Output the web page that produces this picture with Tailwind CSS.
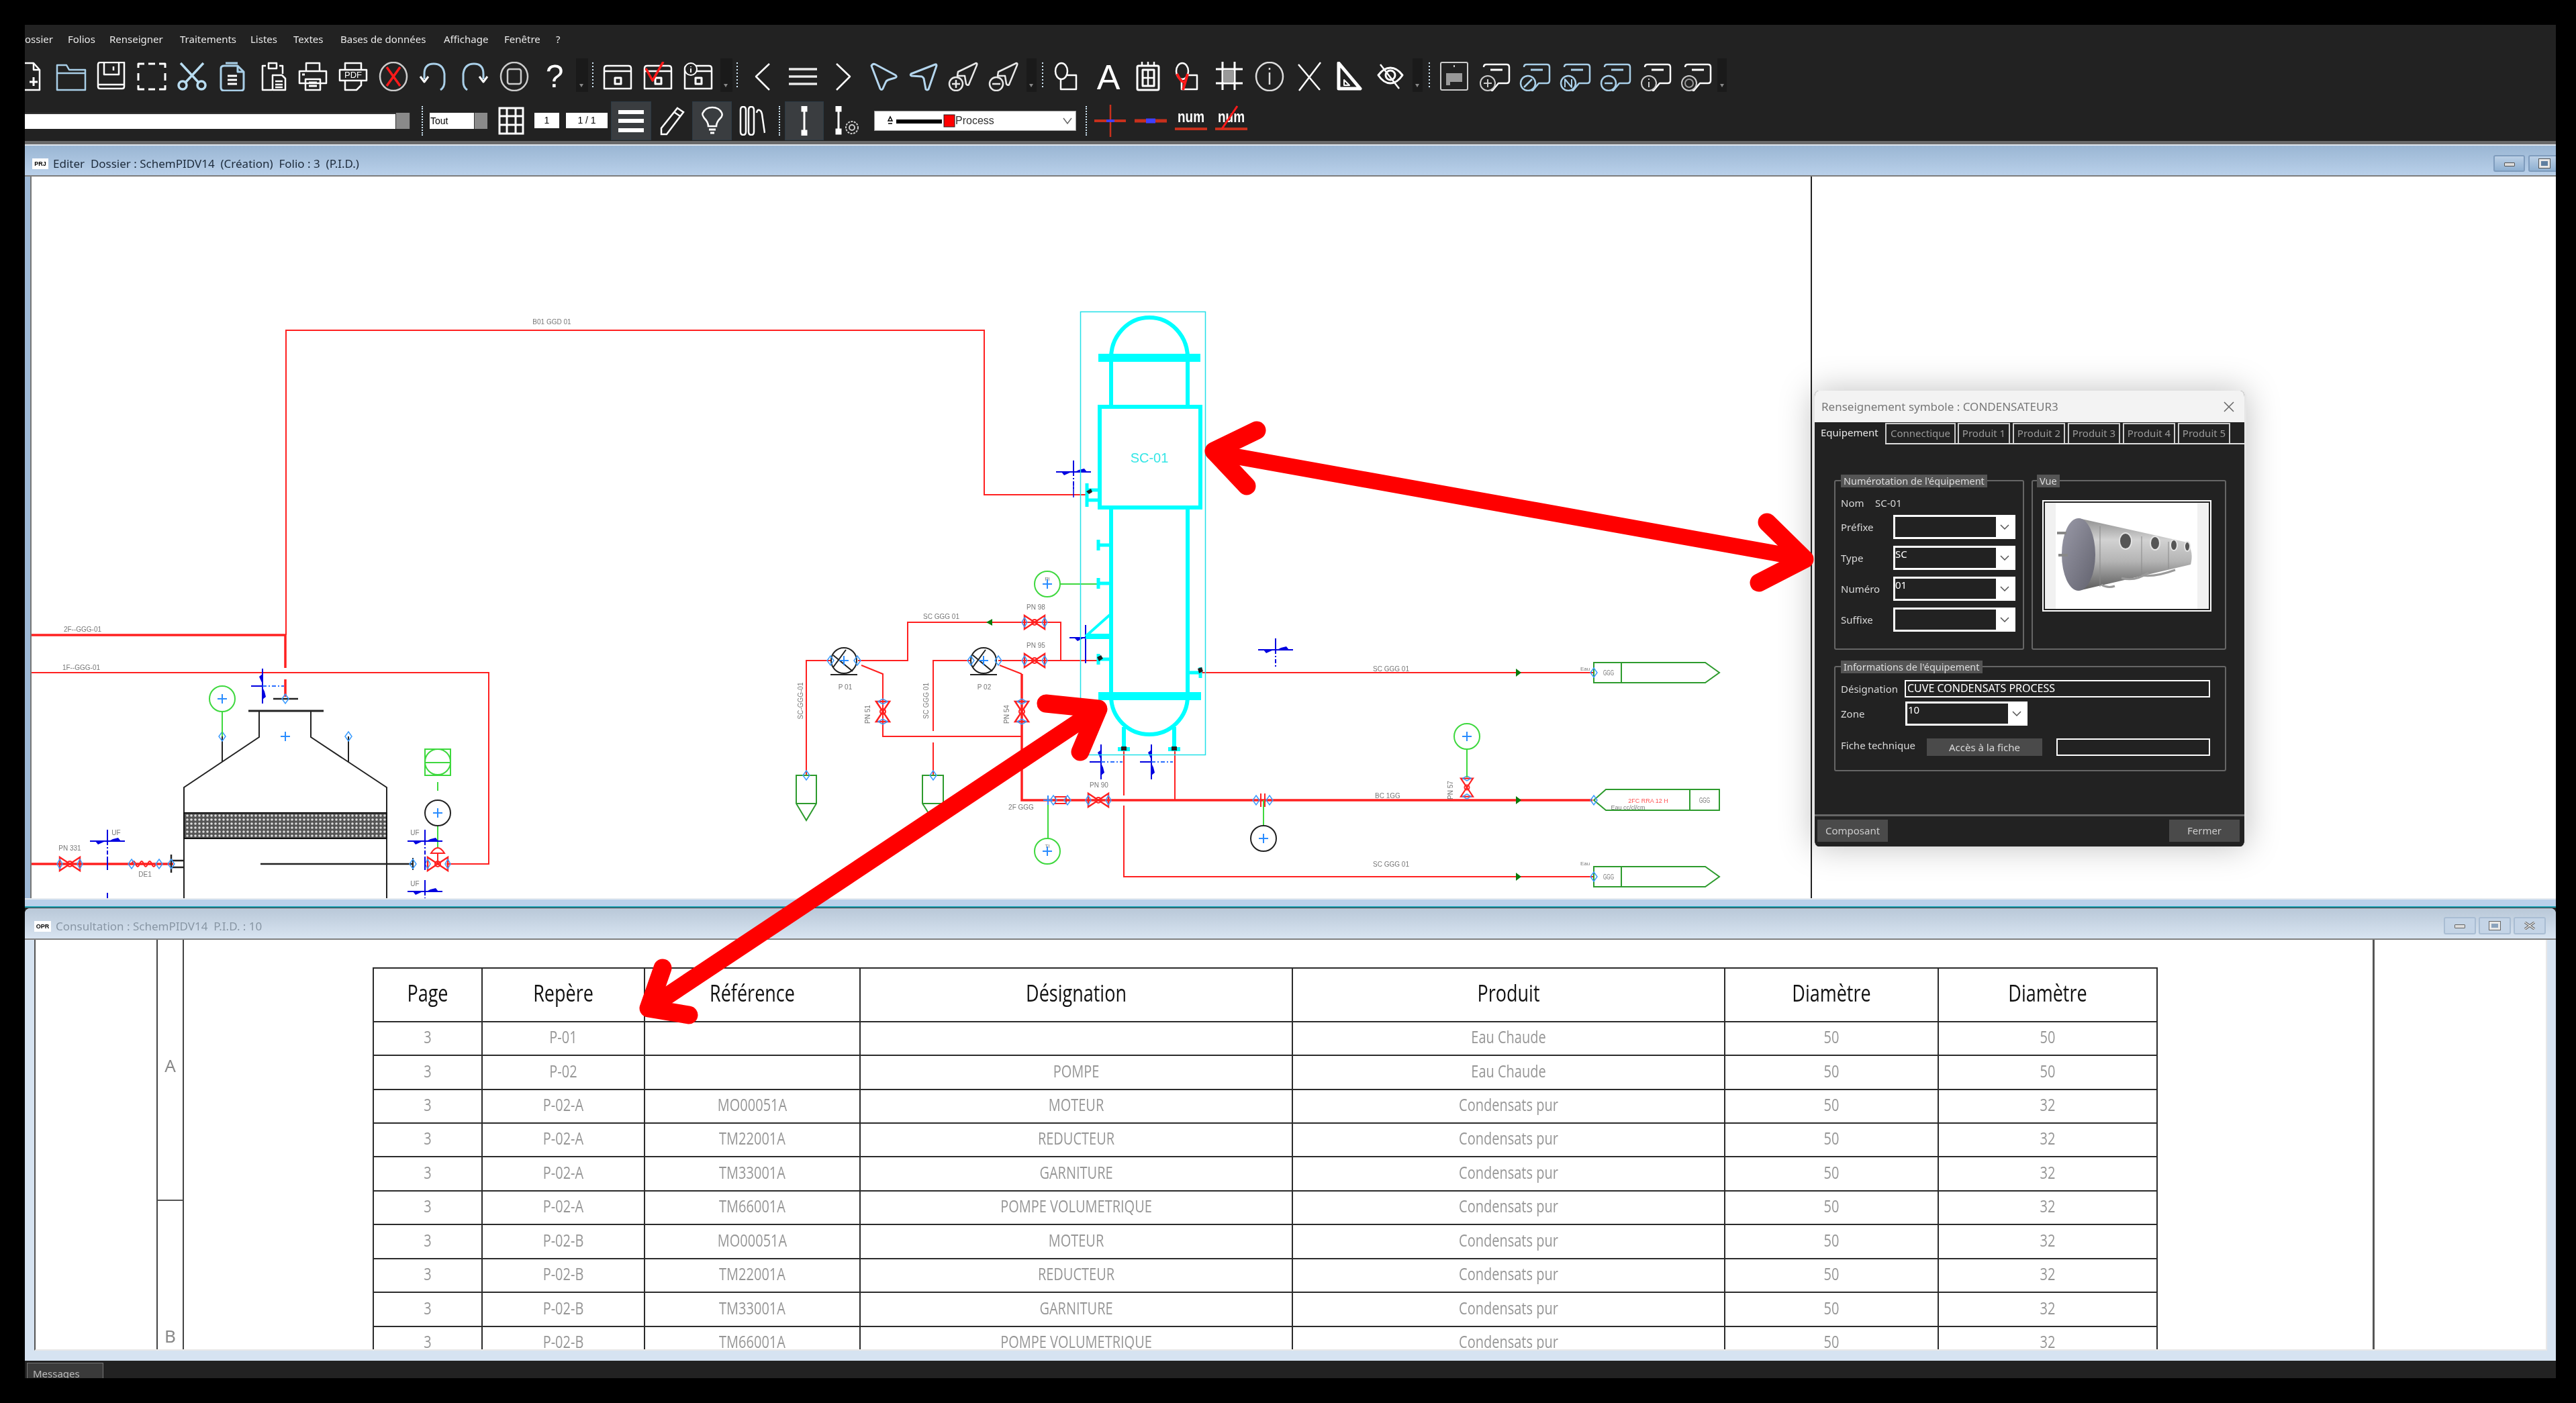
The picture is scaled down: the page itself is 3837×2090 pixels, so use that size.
<!DOCTYPE html>
<html lang="fr">
<head>
<meta charset="utf-8">
<title>Schem P&ID</title>
<script src="https://cdn.jsdelivr.net/npm/@tailwindcss/browser@4"></script>
</head>
<body class="bg-black">
<div class="relative w-[3837px] h-[2090px] bg-black overflow-hidden font-['Noto_Sans',sans-serif] blur-[0.7px]">
  <div class="absolute left-[37px] top-[37px] w-[3770px] h-[2016px] flex flex-col overflow-hidden bg-[#222222]">

    <!-- menu -->
    <div class="h-[55px] pt-[9px] flex text-[15px] leading-[24px] text-[#e8e8e8] shrink-0">
      <span class="w-[64px]">ossier</span>
      <span class="w-[62px]">Folios</span>
      <span class="w-[105px]">Renseigner</span>
      <span class="w-[105px]">Traitements</span>
      <span class="w-[64px]">Listes</span>
      <span class="w-[70px]">Textes</span>
      <span class="w-[154px]">Bases de données</span>
      <span class="w-[90px]">Affichage</span>
      <span class="w-[77px]">Fenêtre</span>
      <span>?</span>
    </div>

    <!-- toolbar 1 -->
    <div class="h-[57px] shrink-0 flex items-start -ml-[21px] fill-none stroke-white stroke-[2.5] [stroke-linejoin:round]">
      <svg width="60" height="44" viewBox="0 0 60 44"><path d="M18 2h16l9 10v30H18z"/><path d="M34 2v10h9"/><path d="M34 23v13M28 30h12" stroke-width="3"/></svg>
      <svg width="60" height="44" viewBox="0 0 60 44" stroke="#a9cfe8"><path d="M9 42V5h14l4 7h24v30z M9 17h42"/></svg>
      <svg width="60" height="44" viewBox="0 0 60 44"><path d="M10 4q0-3 3-3h36v36q0 3-3 3H13q-3 0-3-3z"/><path d="M19 2v17h22V2M33 7v6M11 34h38"/></svg>
      <svg width="60" height="44" viewBox="0 0 60 44"><path d="M10 9V3h9M41 3h9v6M50 17v11M50 35v6h-9M19 41h-9v-6M10 28V17M25 3h10M25 41h10" stroke-width="3"/></svg>
      <svg width="60" height="44" viewBox="0 0 60 44" stroke="#b8dcf0" stroke-width="3.5"><path d="M13 2l26 28M47 2L21 30"/><circle cx="16" cy="35" r="6"/><circle cx="44" cy="35" r="6"/></svg>
      <svg width="60" height="44" viewBox="0 0 60 44" stroke="#a9cfe8" stroke-width="3"><path d="M18 6h20l9 9v24q0 4-4 4H18q-5 0-5-5V10q0-4 5-4z"/><path d="M38 2H20M38 6v9h9" /><path d="M23 21h14M23 27h14M23 33h14" stroke="white"/></svg>
      <svg width="60" height="44" viewBox="0 0 60 44"><path d="M20 6h-5v36h14M40 6h5v12"/><path d="M24 2h12v8H24z"/><path d="M30 20h14l5 5v17H30z"/><path d="M34 29h11M34 34h11M34 38h11"/></svg>
      <svg width="60" height="44" viewBox="0 0 60 44"><path d="M20 14V2h20v12M10 14h40v18H10zM19 26h22v16H19z"/><path d="M24 31h12M24 36h12M14 19h4" stroke-width="3"/></svg>
      <svg width="60" height="44" viewBox="0 0 60 44"><path d="M18 12V2h24v10M10 12h40v16H10zM18 28v14h17l7-7v-7"/><text x="30" y="24" font-size="13" fill="white" stroke="none" text-anchor="middle" font-family="Liberation Sans">PDF</text></svg>
      <svg width="60" height="44" viewBox="0 0 60 44" stroke="#cccccc"><ellipse cx="30" cy="22" rx="20" ry="21"/><path d="M20 8l20 28M40 8L20 36" stroke="#ff1a1a" stroke-width="3.5"/></svg>
      <svg width="60" height="44" viewBox="0 0 60 44" stroke="#a9cfe8" stroke-width="3"><path d="M16 26V18Q16 3 30 3T46 18v12q0 8-6 12"/><path d="M10 22l6 8 6-8" stroke="white"/></svg>
      <svg width="60" height="44" viewBox="0 0 60 44" stroke="#a9cfe8" stroke-width="3"><path d="M44 26V18Q44 3 30 3T14 18v12q0 8 6 12"/><path d="M38 22l6 8 6-8" stroke="white"/></svg>
      <svg width="60" height="44" viewBox="0 0 60 44" stroke="#cccccc"><ellipse cx="30" cy="22" rx="20" ry="21"/><rect x="20" y="11" width="20" height="22" rx="3"/></svg>
      <svg class="overflow-visible" width="60" height="44" viewBox="0 0 60 44"><text x="30" y="38" font-size="48" fill="white" stroke="none" text-anchor="middle" font-family="Liberation Sans">?</text></svg>

      <svg width="34" height="50" viewBox="0 0 34 50" class="-mt-[5px]"><rect x="2" y="0" width="18" height="50" fill="#1a1a1a" stroke="none"/><path d="M7 38l3 5 3-5z" fill="#888" stroke="none"/><path d="M27 6V44" stroke-dasharray="2 3" stroke-width="2" stroke="#cfe6f5"/></svg>

      <svg width="60" height="44" viewBox="0 0 60 44"><path d="M10 10q0-4 4-4h32q4 0 4 4v30H10zM10 14h40"/><rect x="26" y="24" width="9" height="9" stroke-width="3"/></svg>
      <svg width="60" height="44" viewBox="0 0 60 44"><path d="M10 10q0-4 4-4h32q4 0 4 4v30H10zM10 14h40"/><rect x="26" y="24" width="9" height="9" stroke-width="3"/><path d="M12 10l10 18L38 0" stroke="#ff1a1a" stroke-width="3.5"/></svg>
      <svg width="60" height="44" viewBox="0 0 60 44"><path d="M10 10q0-4 4-4h32q4 0 4 4v30H10zM10 14h40"/><rect x="26" y="24" width="9" height="9" stroke-width="3"/><circle cx="19" cy="11" r="9" fill="#222" stroke-width="2"/><path d="M19 7v1M19 10v6" stroke-width="2"/></svg>

      <svg width="36" height="50" viewBox="0 0 36 50" class="-mt-[5px]"><rect x="3" y="0" width="18" height="50" fill="#1a1a1a" stroke="none"/><path d="M8 38l3 5 3-5z" fill="#888" stroke="none"/><path d="M28 6V44" stroke-dasharray="2 3" stroke-width="2" stroke="#cfe6f5"/></svg>

      <svg width="60" height="44" viewBox="0 0 60 44"><path d="M40 3L20 22l20 20"/></svg>
      <svg width="60" height="44" viewBox="0 0 60 44" stroke="#e8e8e8" stroke-width="3.5"><path d="M9 11h42M9 22h42M9 33h42"/></svg>
      <svg width="60" height="44" viewBox="0 0 60 44"><path d="M20 3l20 19-20 20"/></svg>
      <svg width="60" height="44" viewBox="0 0 60 44" stroke="#b4d6ee" stroke-width="3"><path d="M12 6q2-4 6-2l30 16q3 3-1 4l-10 3q-3 1-4 4l-4 9q-2 3-4 0z"/></svg>
      <svg width="60" height="44" viewBox="0 0 60 44" stroke="#b4d6ee" stroke-width="3"><path d="M47 4q2-1 2 2L37 41q-2 2-4 0l-3-16q-1-2-3-3L12 21q-3-1-1-3z"/></svg>
      <svg width="60" height="44" viewBox="0 0 60 44" stroke="#e8e8e8"><path d="M48 2q2 0 1 3L37 34q-2 2-4-1l-2-12-11 0 1-6z"/><circle cx="18" cy="33" r="10" fill="#222"/><path d="M18 27v12M12 33h12"/></svg>
      <svg width="60" height="44" viewBox="0 0 60 44" stroke="#e8e8e8"><path d="M48 2q2 0 1 3L37 34q-2 2-4-1l-2-12-11 0 1-6z"/><circle cx="18" cy="33" r="10" fill="#222"/><path d="M12 33h12"/></svg>

      <svg width="35" height="50" viewBox="0 0 35 50" class="-mt-[5px]"><rect x="3" y="0" width="15" height="50" fill="#1a1a1a" stroke="none"/><path d="M7 38l3 5 3-5z" fill="#888" stroke="none"/><path d="M27 6V44" stroke-dasharray="2 3" stroke-width="2" stroke="#cfe6f5"/></svg>

      <svg width="60" height="44" viewBox="0 0 60 44"><ellipse cx="20" cy="14" rx="9" ry="12"/><path d="M27 20h15v21H19V26"/></svg>
      <svg class="overflow-visible" width="60" height="44" viewBox="0 0 60 44"><text x="30" y="41" font-size="52" fill="white" stroke="none" text-anchor="middle" font-family="Liberation Sans">A</text></svg>
      <svg width="60" height="44" viewBox="0 0 60 44"><rect x="13" y="6" width="32" height="36" rx="2" stroke-width="3"/><rect x="21" y="12" width="17" height="24" stroke-width="3"/><path d="M20 0v6M29 0v6M38 0v6M29 12v24M21 24h17"/></svg>
      <svg width="60" height="44" viewBox="0 0 60 44"><ellipse cx="20" cy="14" rx="9" ry="12"/><path d="M27 20h15v21H19V26"/><path d="M12 18q7 14 12 12M28 18L21 42" stroke="#ff1a1a" stroke-width="4"/></svg>
      <svg width="60" height="44" viewBox="0 0 60 44" stroke-width="3"><path d="M20 0v42M38 0v42M10 11h40M10 32h40"/><path d="M22 13h14v18H22z" fill="#999" stroke="none"/></svg>
      <svg width="60" height="44" viewBox="0 0 60 44" stroke="#dddddd"><ellipse cx="30" cy="22" rx="20" ry="21"/><path d="M30 16v18M30 9v3"/></svg>
      <svg width="60" height="44" viewBox="0 0 60 44"><path d="M46 1L14 43M13 4l32 38"/></svg>
      <svg width="60" height="44" viewBox="0 0 60 44"><path d="M13 2l32 38H13z" stroke-width="5"/><path d="M21 27l8 8h-8z" stroke-width="2"/></svg>
      <svg width="60" height="44" viewBox="0 0 60 44" stroke-width="3"><path d="M12 20q8-11 18-11t18 11q-8 12-18 12T12 20z"/><circle cx="30" cy="20" r="7"/><path d="M15 4l28 36" stroke-width="2.5"/></svg>

      <svg width="35" height="50" viewBox="0 0 35 50" class="-mt-[5px]"><rect x="3" y="0" width="15" height="50" fill="#1a1a1a" stroke="none"/><path d="M7 38l3 5 3-5z" fill="#888" stroke="none"/><path d="M28 6V44" stroke-dasharray="2 3" stroke-width="2" stroke="#cfe6f5"/></svg>

      <svg width="60" height="44" viewBox="0 0 60 44" stroke-width="2" stroke="#cccccc"><rect x="10" y="1" width="40" height="41" rx="2"/><path d="M30 5v3"/><path d="M18 17h24v13H24v5h-6z" fill="#999" stroke="none"/></svg>
      <svg width="60" height="44" viewBox="0 0 60 44"><path d="M14 8q0-4 4-4h30q4 0 4 4v20q0 4-4 4H36L26 44l1-12"/><path d="M24 12h18" stroke-width="3"/><circle cx="20" cy="32" r="11" fill="#222" stroke="#ccc" stroke-width="2"/><path d="M20 26v12M14 32h12" stroke="#ccc" stroke-width="2"/></svg>
      <svg width="60" height="44" viewBox="0 0 60 44" stroke="#a9cfe8"><path d="M14 8q0-4 4-4h30q4 0 4 4v20q0 4-4 4H36L26 44l1-12"/><path d="M24 12h18" stroke-width="3"/><circle cx="20" cy="32" r="11" fill="#222"/><path d="M14 38L26 26"/></svg>
      <svg width="60" height="44" viewBox="0 0 60 44" stroke="#a9cfe8"><path d="M14 8q0-4 4-4h30q4 0 4 4v20q0 4-4 4H36L26 44l1-12"/><path d="M24 12h18" stroke-width="3"/><circle cx="20" cy="32" r="11" fill="#222"/><path d="M15 38V26l10 12V26" stroke-width="2"/></svg>
      <svg width="60" height="44" viewBox="0 0 60 44" stroke="#a9cfe8"><path d="M14 8q0-4 4-4h30q4 0 4 4v20q0 4-4 4H36L26 44l1-12"/><path d="M24 12h18" stroke-width="3"/><circle cx="20" cy="32" r="11" fill="#222"/><path d="M14 32h12"/></svg>
      <svg width="60" height="44" viewBox="0 0 60 44"><path d="M14 8q0-4 4-4h30q4 0 4 4v20q0 4-4 4H36L26 44l1-12"/><path d="M24 12h18" stroke-width="3"/><circle cx="20" cy="32" r="11" fill="#222" stroke="#ccc" stroke-width="2"/><path d="M20 30v8M20 25v2" stroke="#ccc" stroke-width="2"/></svg>
      <svg width="60" height="44" viewBox="0 0 60 44"><path d="M14 8q0-4 4-4h30q4 0 4 4v20q0 4-4 4H36L26 44l1-12"/><path d="M24 12h18" stroke-width="3"/><circle cx="20" cy="32" r="11" fill="#222" stroke="#ccc" stroke-width="2"/><circle cx="20" cy="32" r="6" stroke="#999" stroke-width="2"/></svg>

      <svg width="20" height="50" viewBox="0 0 20 50" class="-mt-[5px]"><rect x="2" y="0" width="14" height="50" fill="#1a1a1a" stroke="none"/><path d="M6 38l3 5 3-5z" fill="#888" stroke="none"/></svg>
    </div>

    <!-- toolbar 2 -->
    <div class="h-[61px] shrink-0 flex items-center fill-none stroke-white stroke-[2.5]">
      <div class="w-[552px] h-[24px] bg-white border-t-2 border-[#333]"></div>
      <div class="w-[22px] h-[24px] bg-[#8a8a8a] border-x border-[#333]"></div>
      <div class="ml-[17px] w-0 h-[44px] border-l-2 border-dotted border-[#cfe6f5]"></div>
      <div class="ml-[10px] w-[66px] h-[24px] bg-white text-black text-[14px] leading-[24px] pl-[1px] font-['Liberation_Sans',sans-serif]">Tout</div>
      <div class="w-[20px] h-[24px] bg-[#8a8a8a] border-l border-[#333]"></div>
      <svg class="ml-[16px]" width="39" height="42" viewBox="0 0 39 42" stroke-width="3"><rect x="2" y="2" width="35" height="38"/><path d="M13 2v38M26 2v38M2 14h35M2 27h35"/></svg>
      <div class="ml-[15px] w-[37px] h-[23px] bg-white text-black text-[14px] leading-[23px] text-center font-['Liberation_Sans',sans-serif]">1</div>
      <div class="ml-[10px] w-[62px] h-[23px] bg-white text-black text-[14px] leading-[23px] text-center font-['Liberation_Sans',sans-serif]">1 / 1</div>
      <div class="ml-[5px] w-[60px] h-[58px] bg-[#3a3d40] border border-[#2c3a44] flex items-center justify-center"><svg width="40" height="40" viewBox="0 0 40 40" stroke-width="5"><path d="M1 7h38M1 20h38M1 34h38" stroke-width="6"/></svg></div>
      <svg class="ml-[13px]" width="37" height="44" viewBox="0 0 37 44" stroke-width="2.5"><path d="M26 3l9 6L10 42l-8 0 0-9z"/><path d="M21 9l9 6"/></svg>
      <div class="ml-[11px] w-[59px] h-[58px] bg-[#3a3d40] border border-[#2c3a44] flex items-center justify-center"><svg width="36" height="44" viewBox="0 0 36 44" stroke-width="2.5"><path d="M12 30q0-6-6-12Q2 12 4 10 8 2 18 2t14 8q2 4-2 8-6 6-6 12z"/><path d="M13 35h10M15 40h6" stroke-width="3"/></svg></div>
      <svg class="ml-[11px]" width="39" height="44" viewBox="0 0 39 44" stroke-width="2.5"><path d="M2 6q0-5 4-5t4 5v32q0 5-4 5T2 38z M14 6q0-5 4-5t4 5v32q0 5-4 5t-4-5z M26 10q1-5 4-4t4 6l4 28"/></svg>
      <div class="ml-[20px] w-0 h-[44px] border-l-2 border-dotted border-[#cfe6f5]"></div>
      <div class="ml-[7px] w-[58px] h-[58px] bg-[#3a3d40] border border-[#2c3a44] flex items-center justify-center"><svg width="16" height="44" viewBox="0 0 16 44" stroke-width="3"><path d="M8 2v40" /><path d="M5 1h6v6H5zM5 37h6v6H5z" fill="white"/></svg></div>
      <svg class="ml-[16px]" width="38" height="44" viewBox="0 0 38 44" stroke-width="3"><path d="M6 2v36"/><path d="M3 1h6v6H3zM3 35h6v6H3z" fill="white"/><circle cx="26" cy="32" r="9" stroke-width="2" stroke-dasharray="3 1.5" stroke="#ccc"/><circle cx="26" cy="32" r="4" stroke-width="2" stroke="#ccc"/></svg>
      <div class="ml-[21px] w-[301px] h-[30px] bg-white border border-[#999] flex items-center text-[16px] text-[#333] stroke-black relative">
        <svg width="120" height="24" viewBox="0 0 120 24" class="shrink-0"><path d="M20 12l3-6 3 6zM20 16h6" stroke-width="1.5"/><path d="M32 13H100" stroke-width="6"/><rect x="103" y="3" width="16" height="18" fill="#ff0000" stroke="#222" stroke-width="1"/></svg>
        <span class="font-['Liberation_Sans',sans-serif]">Process</span>
        <svg class="ml-auto mr-[5px]" width="14" height="10" viewBox="0 0 14 10" stroke="#666" stroke-width="1.5"><path d="M1 1l6 8 6-8"/></svg>
      </div>
      <div class="ml-[14px] w-0 h-[44px] border-l-2 border-dotted border-[#cfe6f5]"></div>
      <svg class="ml-[11px]" width="47" height="48" viewBox="0 0 47 48" stroke-width="4"><path d="M0 24h47" stroke="#c8301c" stroke-width="4"/><path d="M24 0v48" stroke="#c8301c" stroke-width="2.5"/><path d="M18 24h12" stroke="#4040ff"/></svg>
      <svg class="ml-[13px]" width="48" height="12" viewBox="0 0 48 12"><path d="M0 6h48" stroke="#c8301c" stroke-width="5"/><path d="M17 6h14" stroke="#4040ff" stroke-width="7"/></svg>
      <svg class="ml-[12px] overflow-visible" width="48" height="48" viewBox="0 0 48 48"><text x="24" y="26" font-size="24" fill="white" stroke="none" text-anchor="middle" font-family="Liberation Sans" font-weight="700" textLength="40" lengthAdjust="spacingAndGlyphs">num</text><path d="M0 36h48" stroke="#c8301c" stroke-width="4"/></svg>
      <svg class="ml-[12px] overflow-visible" width="48" height="48" viewBox="0 0 48 48"><text x="24" y="26" font-size="24" fill="white" stroke="none" text-anchor="middle" font-family="Liberation Sans" font-weight="700" textLength="40" lengthAdjust="spacingAndGlyphs">num</text><path d="M0 36h48" stroke="#c8301c" stroke-width="4"/><path d="M10 36L33 2" stroke="#ff1a1a" stroke-width="3"/></svg>
    </div>

    <!-- window 1 -->
    <div class="h-[1143px] shrink-0 flex flex-col">
      <div class="h-[5px] bg-[#6a6a6a] shrink-0"></div>
      <div class="h-[48px] shrink-0 flex items-center pl-[11px] pt-[9px] border-t-2 border-b-2 border-t-[#dfe6ee] border-b-[#7d7d7d] bg-gradient-to-b from-[#9ab6d3] to-[#b9d0ea]">
        <span class="w-[24px] h-[16px] bg-white text-[9px] leading-[16px] text-black text-center font-bold font-['Liberation_Sans',sans-serif]">PRJ</span>
        <span class="ml-[7px] text-[17px] text-[#1c2a3a]">Editer&nbsp; Dossier : SchemPIDV14&nbsp; (Création)&nbsp; Folio : 3&nbsp; (P.I.D.)</span>
        <div class="ml-auto flex gap-[5px] -mr-[6px]">
          <div class="w-[47px] h-[25px] rounded-[3px] border-2 border-[#7f9cbd] bg-gradient-to-b from-[#bcd0e6] to-[#8fb0d1] flex items-center justify-center pt-[3px]"><div class="w-[16px] h-[6px] bg-[#ddd] border border-[#555] rounded-[1px]"></div></div>
          <div class="w-[47px] h-[25px] rounded-[3px] border-2 border-[#7f9cbd] bg-gradient-to-b from-[#bcd0e6] to-[#8fb0d1] flex items-center justify-center"><div class="w-[16px] h-[13px] bg-[#5f7fa0] border-[3px] border-[#e8e8e8] outline outline-[#555]"></div></div>
        </div>
      </div>
      <div class="h-[1075px] shrink-0 flex bg-white overflow-hidden">
        <div class="w-[10px] shrink-0 bg-[#9db8d6] border-r-2 border-[#777]"></div>
        <svg class="shrink-0 block" width="2650" height="1075" viewBox="47 263 2650 1075" fill="none" font-family="Liberation Sans">
          <defs>
            <g id="valve"><path d="M-15 -10L15 10V-10L-15 10Z" stroke="#ff2020" stroke-width="2.5"/><circle r="4" stroke="#ff2020" stroke-width="2"/><path d="M-15 -7L-11 0-15 7-19 0Z M15 -7L19 0 15 7 11 0Z" stroke="#3a9bff" stroke-width="1.5"/></g>
            <g id="mark"><path d="M-26 0H26" stroke="#0000e0" stroke-width="2"/><path d="M0 -17V0" stroke="#0000e0" stroke-width="2"/><path d="M0 0V28" stroke="#0000e0" stroke-width="2" stroke-dasharray="6 3 2 3"/><path d="M-18 0H-3L-14 5Z M2 0H20L16 -5 8 -3Z" fill="#0000e0"/></g>
            <g id="markv"><path d="M0 -26V26" stroke="#0000e0" stroke-width="2"/><path d="M-17 0H0" stroke="#0000e0" stroke-width="2"/><path d="M0 0H32" stroke="#2a6fff" stroke-width="2" stroke-dasharray="6 3 2 3"/><path d="M0 -18V-3L-5 -14Z M0 2V20L5 16 3 8Z" fill="#0000e0"/></g>
            <g id="plus"><path d="M-7 0H7M0 -7V7" stroke="#2a8cff" stroke-width="2"/></g>
            <g id="dia"><path d="M0 -7L5 0 0 7-5 0Z" stroke="#3a9bff" stroke-width="1.5"/></g>
            <pattern id="pack" width="6" height="6" patternUnits="userSpaceOnUse"><rect width="6" height="6" fill="#555"/><circle cx="3" cy="3" r="1.8" fill="#ddd"/></pattern>
          </defs>

          <!-- red pipes -->
          <g stroke="#ff2020" stroke-width="2" fill="none">
            <path d="M426 946V492H1466V737H1617"/>
            <path d="M47 1002H728V1287H665"/>
            <path d="M1278 984H1352V927H1580V984M1487 984H1635"/>
            <path d="M1237 984H1201V1155M1446 984H1390V1089M1390 1106V1155"/>
            <path d="M1283 991L1315 1004V1097H1522"/>
            <path d="M1489 991L1522 1004"/>
            <path d="M1788 1002H2374"/>
            <path d="M1674 1117V1185M1674 1200V1306H2374M1750 1117V1192"/>
          </g>
          <g stroke="#ff2020" stroke-width="3.5" fill="none">
            <path d="M47 946H425V995M425 1012V1038"/>
            <path d="M47 1287H258M1522 1004V1192H2372"/>
          </g>

          <!-- black vessel -->
          <g stroke="#222" stroke-width="2">
            <path d="M370 1059H482" stroke-width="3"/>
            <path d="M386 1059V1098L274 1173V1340M463 1059V1098L576 1173V1340"/>
            <path d="M407 1041H444" stroke-width="2.5"/>
            <path d="M331 1097V1135M519 1097V1135"/>
            <path d="M388 1287H615" stroke-width="2.5"/>
            <path d="M255 1273V1300" stroke-width="2.5"/>
            <path d="M255 1282H274M255 1292H274" stroke-width="2.5"/>
            <path d="M615 1278V1296"/>
          </g>
          <rect x="274" y="1211" width="302" height="38" fill="url(#pack)" stroke="#111" stroke-width="2"/>
          <use href="#dia" x="425" y="1041"/><use href="#dia" x="331" y="1097"/><use href="#dia" x="519" y="1097"/><use href="#plus" x="425" y="1097"/>
          <use href="#markv" x="391" y="1022"/>
          <ellipse cx="331" cy="1041" rx="19" ry="19" stroke="#3ed83e" stroke-width="2" fill="#fff"/><path d="M331 1060V1097" stroke="#3ed83e" stroke-width="2"/><use href="#plus" x="331" y="1041"/>
          <rect x="633" y="1116" width="38" height="39" stroke="#3ed83e" stroke-width="2"/><circle cx="652" cy="1135" r="19" stroke="#3ed83e" stroke-width="2"/><path d="M633 1136H671M652 1165V1178M652 1230V1263" stroke="#3ed83e" stroke-width="2"/>
          <ellipse cx="652" cy="1211" rx="19" ry="19" stroke="#222" stroke-width="2"/><use href="#plus" x="652" y="1211"/>
          <path d="M642 1271Q652 1255 662 1271Z" stroke="#ff2020" stroke-width="2"/><path d="M652 1271V1287" stroke="#ff2020" stroke-width="2"/>
          <use href="#valve" x="104" y="1287"/><use href="#valve" x="652" y="1287"/>
          <use href="#mark" x="160" y="1253"/><use href="#mark" x="633" y="1253"/><use href="#mark" x="633" y="1328"/>
          <path d="M160 1278V1296M633 1278V1296M160 1330V1340" stroke="#0000e0" stroke-width="2"/>
          <path d="M196 1287q3-8 6 0t6 0 6 0 6 0 6 0 6 0" stroke="#ff2020" stroke-width="2"/><use href="#dia" x="196" y="1287"/><use href="#dia" x="237" y="1287"/><use href="#dia" x="255" y="1287"/><use href="#dia" x="615" y="1287"/>

          <!-- pumps -->
          <g stroke="#222" stroke-width="2">
            <circle cx="1257" cy="984" r="19" fill="#fff"/><path d="M1241 976L1270 1000M1241 994L1260 968M1237 1005H1277"/>
            <circle cx="1465" cy="984" r="19" fill="#fff"/><path d="M1449 976L1478 1000M1449 994L1468 968M1445 1005H1485"/>
          </g>
          <use href="#plus" x="1257" y="984"/><use href="#plus" x="1465" y="984"/>
          <use href="#dia" x="1237" y="984"/><use href="#dia" x="1277" y="984"/><use href="#dia" x="1446" y="984"/><use href="#dia" x="1487" y="984"/>
          <!-- tanks -->
          <g stroke="#2d9b2d" stroke-width="2">
            <path d="M1186 1155H1216V1197L1201 1222 1186 1197ZM1186 1197H1216"/>
            <path d="M1374 1155H1405V1197L1390 1222 1374 1197ZM1374 1197H1405"/>
            <path d="M2374 987H2540L2561 1002 2540 1017H2374ZM2415 987V1017"/>
            <path d="M2374 1192L2392 1176H2561V1207H2392ZM2517 1176V1207"/>
            <path d="M2374 1291H2540L2561 1306 2540 1321H2374ZM2415 1291V1321"/>
          </g>
          <use href="#dia" x="1201" y="1155"/><use href="#dia" x="1390" y="1155"/><use href="#dia" x="2374" y="1002"/><use href="#dia" x="2374" y="1192"/><use href="#dia" x="2374" y="1306"/>
          <g fill="#0a7a0a"><path d="M2258 996l8 6-8 6zM1478 922l-9 5 9 5zM2258 1186l8 6-8 6zM2258 1300l8 6-8 6z"/></g>

          <use href="#valve" x="1541" y="927"/><use href="#valve" x="1541" y="984"/><use href="#valve" x="1636" y="1192"/>
          <use href="#valve" transform="translate(1315 1060) rotate(90)"/><use href="#valve" transform="translate(1522 1060) rotate(90)"/><use href="#valve" transform="translate(2185 1173) rotate(90) scale(.9)"/>
          <rect x="1572" y="1187" width="16" height="10" stroke="#ff2020" stroke-width="2"/><use href="#dia" x="1569" y="1192"/><use href="#dia" x="1590" y="1192"/>
          <path d="M1878 1182V1202M1884 1182V1202" stroke="#ff2020" stroke-width="2"/><use href="#dia" x="1871" y="1192"/><use href="#dia" x="1891" y="1192"/>

          <!-- instruments -->
          <g stroke="#3ed83e" stroke-width="2">
            <path d="M1579 870H1635M1561 1192V1249M1882 1192V1231M2185 1116V1158"/>
            <ellipse cx="1560" cy="870" rx="19" ry="19" fill="#fff"/>
            <ellipse cx="1560" cy="1268" rx="19" ry="19" fill="#fff"/>
            <ellipse cx="2185" cy="1097" rx="19" ry="19" fill="#fff"/>
          </g>
          <ellipse cx="1882" cy="1249" rx="19" ry="19" stroke="#222" stroke-width="2" fill="#fff"/>
          <use href="#plus" x="1560" y="870"/><use href="#plus" x="1560" y="1268"/><use href="#plus" x="2185" y="1097"/><use href="#plus" x="1882" y="1249"/>
          <path d="M1561 1185V1199M1554 1192H1568" stroke="#2a8cff" stroke-width="2"/>
          <use href="#mark" x="1599" y="703"/><path d="M1599 720V741" stroke="#0000e0" stroke-width="1.5"/>
          <use href="#mark" x="1900" y="968"/>
          <path d="M1617 931V988" stroke="#0000e0" stroke-width="2"/><path d="M1593 950H1617" stroke="#0000e0" stroke-width="2"/><path d="M1600 950H1615L1605 955Z" fill="#0000e0"/>
          <use href="#markv" x="1640" y="1135"/><use href="#markv" x="1715" y="1135"/>

          <!-- selected column -->
          <rect x="1609.500" y="464.500" width="186" height="660" stroke="#22e0e8" stroke-width="1.500"/>
          <g stroke="#00ffff" fill="none">
            <path d="M1655 533A57 60 0 0 1 1769 533" stroke-width="6"/>
            <path d="M1636 533H1788" stroke-width="12"/>
            <path d="M1655 533V605M1769 533V605" stroke-width="6"/>
            <rect x="1638" y="606" width="150" height="150" stroke-width="6"/>
            <path d="M1655 757V1037M1769 757V1037" stroke-width="6"/>
            <path d="M1636 1037H1789" stroke-width="12"/>
            <path d="M1655 1037A57 57 0 0 0 1769 1037" stroke-width="6"/>
            <path d="M1620 730H1637M1620 745H1637M1636 812H1655M1636 869H1655M1635 982H1655M1770 1002H1789" stroke-width="5"/>
            <path d="M1619 720V755M1636 804V820M1636 861V877M1636 974V990M1788 994V1010" stroke-width="5"/>
            <path d="M1617 948H1655" stroke-width="8"/><path d="M1617 948L1653 916" stroke-width="4"/>
            <path d="M1674 1083V1115M1749 1083V1115" stroke-width="6"/><path d="M1665 1116H1683M1740 1116H1758" stroke-width="6"/>
          </g>
          <text x="1712" y="689" fill="#35e6e6" font-size="20" text-anchor="middle">SC-01</text>
          <g fill="#222"><path d="M1618 732l7-4 2 5-5 3zM1634 979l6-3 3 5-6 4zM1784 996l6-2 2 6-6 3zM1670 1112h8v6h-8zM1745 1112h8v6h-8z"/></g>

          <!-- tiny labels -->
          <g fill="#777" font-size="10" text-anchor="middle">
            <text x="822" y="483">B01 GGD 01</text><text x="123" y="941">2F--GGG-01</text><text x="121" y="998">1F--GGG-01</text>
            <text x="1543" y="908">PN 98</text><text x="1543" y="965">PN 95</text><text x="1402" y="922">SC GGG 01</text>
            <text x="1259" y="1027">P 01</text><text x="1466" y="1027">P 02</text>
            <text x="1637" y="1173">PN 90</text><text x="1521" y="1206">2F GGG</text>
            <text x="2072" y="1000">SC GGG 01</text><text x="2067" y="1189">BC 1GG</text><text x="2072" y="1291">SC GGG 01</text>
            <text x="2396" y="1006" textLength="16" lengthAdjust="spacingAndGlyphs">GGG</text><text x="2539" y="1196" textLength="16" lengthAdjust="spacingAndGlyphs">GGG</text><text x="2396" y="1310" textLength="16" lengthAdjust="spacingAndGlyphs">GGG</text>
            <text x="2425" y="1206" font-size="9">Eau cc/cl/cm</text>
            <text x="2361" y="999" font-size="8">Eau</text><text x="2361" y="1289" font-size="8">Eau</text>
            <text x="104" y="1267">PN 331</text><text x="216" y="1306">DE1</text><text x="173" y="1244">UF</text><text x="618" y="1244">UF</text><text x="618" y="1320">UF</text>
            <text x="1383" y="1044" transform="rotate(-90 1383 1044)">SC GGG 01</text>
            <text x="1196" y="1044" transform="rotate(-90 1196 1044)">SC-GGG-01</text>
            <text x="1296" y="1064" transform="rotate(-90 1296 1064)">PN 51</text>
            <text x="1503" y="1064" transform="rotate(-90 1503 1064)">PN 54</text>
            <text x="2164" y="1177" transform="rotate(-90 2164 1177)">PN 57</text>
            <text x="1560" y="874" font-size="8" dy="-9">PI</text><text x="1560" y="1272" font-size="8" dy="-9">TI</text>
          </g>
          <text x="2455" y="1196" fill="#ff5050" font-size="9" text-anchor="middle">2FC RRA 12 H</text>
        </svg>
        <div class="w-[2px] shrink-0 bg-[#222]"></div>
        <div class="flex-1 bg-white"></div>
      </div>
      <div class="flex-1 bg-[#b9d0ea] border-t-2 border-[#e6ebf0]"></div>
      <div class="h-[2px] shrink-0 bg-[#1c9fb0]"></div>
      <div class="h-[1px] shrink-0 bg-[#333]"></div>
    </div>

    <!-- window 2 -->
    <div class="h-[674px] shrink-0 flex flex-col bg-[#d6e3f1] rounded-t-[8px]">
      <div class="h-[47px] shrink-0 flex items-center pl-[14px] pr-[15px] pt-[9px] bg-gradient-to-b from-[#b9c8d8] to-[#d8e4f1] border-b-2 border-[#808080] rounded-t-[8px]">
        <span class="w-[25px] h-[16px] bg-white text-[9px] leading-[16px] text-black text-center font-bold font-['Liberation_Sans',sans-serif]">OPR</span>
        <span class="ml-[7px] text-[17px] text-[#8896a4]">Consultation : SchemPIDV14&nbsp; P.I.D. : 10</span>
        <div class="ml-auto flex gap-[4px] -mt-[3px]">
          <div class="w-[48px] h-[26px] rounded-[3px] border-2 border-[#a9bdd3] bg-[#c4d4e6] flex items-center justify-center pt-[3px]"><div class="w-[16px] h-[6px] bg-[#ddd] border border-[#666] rounded-[1px]"></div></div>
          <div class="w-[48px] h-[26px] rounded-[3px] border-2 border-[#a9bdd3] bg-[#c4d4e6] flex items-center justify-center"><div class="w-[16px] h-[12px] bg-[#8ba3bd] border-[3px] border-[#e8e8e8] outline outline-[#666]"></div></div>
          <div class="w-[48px] h-[26px] rounded-[3px] border-2 border-[#a9bdd3] bg-[#c4d4e6] flex items-center justify-center"><svg width="18" height="12" viewBox="0 0 18 12"><path d="M2 1l14 10M16 1L2 11" stroke="#666" stroke-width="3.500"/><path d="M2 1l14 10M16 1L2 11" stroke="#eee" stroke-width="1.500"/></svg></div>
        </div>
      </div>
      <div class="h-[612px] shrink-0 ml-[14px] mr-[13px] bg-white flex overflow-hidden border-r-2 border-b-2 border-[#e8e8e8] border-l-2 border-l-[#555]">
        <div class="w-[180px] shrink-0"></div>
        <div class="w-[41px] shrink-0 border-x-2 border-[#444] flex flex-col text-[26px] text-[#888] text-center">
          <div class="h-[389px] shrink-0 border-b-2 border-[#555] flex items-center justify-center pb-[12px]">A</div>
          <div class="h-[390px] shrink-0 flex items-center justify-center pt-[12px]">B</div>
        </div>
        <div class="w-[281px] shrink-0"></div>
        <div class="w-[2657px] shrink-0 pt-[41px]">
          <table class="table-fixed border-collapse w-[2657px] font-['Open_Sans',sans-serif] text-center text-[20px] text-[#969696] [&_td]:border-2 [&_td]:border-[#2b2b2b] [&_th]:border-2 [&_th]:border-[#2b2b2b] [&_th]:font-normal [&_th]:text-[27px] [&_th]:text-[#111] [&_span]:inline-block [&_span]:scale-y-[1.25] [&_span]:-translate-y-[2px]">
            <colgroup><col class="w-[162px]"><col class="w-[242px]"><col class="w-[321px]"><col class="w-[644px]"><col class="w-[644px]"><col class="w-[318px]"><col class="w-[326px]"></colgroup>
            <thead><tr class="h-[80px]"><th><span>Page</span></th><th><span>Repère</span></th><th><span>Référence</span></th><th><span>Désignation</span></th><th><span>Produit</span></th><th><span>Diamètre</span></th><th><span>Diamètre</span></th></tr></thead>
            <tbody>
              <tr class="h-[50px]"><td><span>3</span></td><td><span>P-01</span></td><td></td><td></td><td><span>Eau Chaude</span></td><td><span>50</span></td><td><span>50</span></td></tr>
              <tr class="h-[51px]"><td><span>3</span></td><td><span>P-02</span></td><td></td><td><span>POMPE</span></td><td><span>Eau Chaude</span></td><td><span>50</span></td><td><span>50</span></td></tr>
              <tr class="h-[50px]"><td><span>3</span></td><td><span>P-02-A</span></td><td><span>MO00051A</span></td><td><span>MOTEUR</span></td><td><span>Condensats pur</span></td><td><span>50</span></td><td><span>32</span></td></tr>
              <tr class="h-[50px]"><td><span>3</span></td><td><span>P-02-A</span></td><td><span>TM22001A</span></td><td><span>REDUCTEUR</span></td><td><span>Condensats pur</span></td><td><span>50</span></td><td><span>32</span></td></tr>
              <tr class="h-[51px]"><td><span>3</span></td><td><span>P-02-A</span></td><td><span>TM33001A</span></td><td><span>GARNITURE</span></td><td><span>Condensats pur</span></td><td><span>50</span></td><td><span>32</span></td></tr>
              <tr class="h-[50px]"><td><span>3</span></td><td><span>P-02-A</span></td><td><span>TM66001A</span></td><td><span>POMPE VOLUMETRIQUE</span></td><td><span>Condensats pur</span></td><td><span>50</span></td><td><span>32</span></td></tr>
              <tr class="h-[51px]"><td><span>3</span></td><td><span>P-02-B</span></td><td><span>MO00051A</span></td><td><span>MOTEUR</span></td><td><span>Condensats pur</span></td><td><span>50</span></td><td><span>32</span></td></tr>
              <tr class="h-[50px]"><td><span>3</span></td><td><span>P-02-B</span></td><td><span>TM22001A</span></td><td><span>REDUCTEUR</span></td><td><span>Condensats pur</span></td><td><span>50</span></td><td><span>32</span></td></tr>
              <tr class="h-[51px]"><td><span>3</span></td><td><span>P-02-B</span></td><td><span>TM33001A</span></td><td><span>GARNITURE</span></td><td><span>Condensats pur</span></td><td><span>50</span></td><td><span>32</span></td></tr>
              <tr class="h-[50px]"><td><span>3</span></td><td><span>P-02-B</span></td><td><span>TM66001A</span></td><td><span>POMPE VOLUMETRIQUE</span></td><td><span>Condensats pur</span></td><td><span>50</span></td><td><span>32</span></td></tr>
            </tbody>
          </table>
        </div>
        <div class="w-[322px] shrink-0"></div>
        <div class="w-[3px] shrink-0 bg-[#555]"></div>
        <div class="flex-1"></div>
      </div>
    </div>

    <!-- status -->
    <div class="flex-1 bg-[#222] pt-[3px] pl-[3px] overflow-hidden">
      <div class="w-[114px] h-[30px] bg-[#3a3a3a] border border-[#777] text-[15px] text-[#bbb] pl-[8px] leading-[30px]">Messages</div>
    </div>
  </div>

  <!-- dialog -->
  <div class="absolute left-[2700px] top-[582px] w-[646px] h-[679px] flex flex-col bg-[#222] rounded-[9px] overflow-hidden border-x-[3px] border-[#e6e6e6] shadow-[0_0_50px_rgba(0,0,0,0.25)] text-[15px] text-[#d8d8d8]">
    <div class="h-[47px] shrink-0 bg-[#f3f3f3] flex items-center pl-[10px] pr-[14px] text-[#777] text-[17px]">
      <span>Renseignement symbole : CONDENSATEUR3</span>
      <svg class="ml-auto" width="18" height="18" viewBox="0 0 18 18"><path d="M2 2l14 14M16 2L2 16" stroke="#666" stroke-width="1.500"/></svg>
    </div>
    <div class="h-[587px] shrink-0 border-b-[3px] border-[#666] flex flex-col">
      <div class="h-[33px] shrink-0 flex items-end border-b-2 border-[#ddd] text-[15px] text-[#999] -mb-[1px]">
        <div class="w-[105px] pl-[9px] h-[31px] leading-[26px] text-[#e8e8e8] bg-[#222] -mb-[2px] z-10">Equipement</div>
        <div class="w-[105px] h-[30px] border-2 border-[#ccc] border-b-0 text-center leading-[26px]">Connectique</div>
        <div class="ml-[3px] w-[78px] h-[30px] border-2 border-[#ccc] border-b-0 text-center leading-[26px]">Produit 1</div>
        <div class="ml-[4px] w-[78px] h-[30px] border-2 border-[#ccc] border-b-0 text-center leading-[26px]">Produit 2</div>
        <div class="ml-[4px] w-[78px] h-[30px] border-2 border-[#ccc] border-b-0 text-center leading-[26px]">Produit 3</div>
        <div class="ml-[4px] w-[78px] h-[30px] border-2 border-[#ccc] border-b-0 text-center leading-[26px]">Produit 4</div>
        <div class="ml-[4px] w-[78px] h-[30px] border-2 border-[#ccc] border-b-0 text-center leading-[26px]">Produit 5</div>
      </div>
      <div class="pl-[29px] pt-[54px] w-[613px]">
        <div class="flex gap-[11px]">
          <div class="relative w-[283px] h-[253px] shrink-0 border-2 border-[#666] rounded-[3px] pt-[18px] pl-[8px]">
            <div class="absolute left-[8px] -top-[10px] h-[19px] leading-[18px] px-[4px] bg-[#555] text-[#ddd] text-[14.500px] whitespace-nowrap">Numérotation de l'équipement</div>
            <div class="h-[28px] flex items-center mb-[4px]"><span class="w-[51px]">Nom</span><span>SC-01</span></div>
            <div class="flex flex-col gap-[10px]">
              <div class="flex items-center h-[36px]"><span class="w-[78px]">Préfixe</span><div class="w-[182px] h-[36px] flex border-[3px] border-white bg-white"><div class="w-[150px] bg-[#222] text-white leading-[18px]"></div><div class="flex-1 flex items-center justify-center"><svg width="14" height="8" viewBox="0 0 14 8"><path d="M1 1l6 6 6-6" stroke="#555" stroke-width="1.500" fill="none"/></svg></div></div></div>
              <div class="flex items-center h-[36px]"><span class="w-[78px]">Type</span><div class="w-[182px] h-[36px] flex border-[3px] border-white bg-white"><div class="w-[150px] bg-[#222] text-white leading-[18px]">SC</div><div class="flex-1 flex items-center justify-center"><svg width="14" height="8" viewBox="0 0 14 8"><path d="M1 1l6 6 6-6" stroke="#555" stroke-width="1.500" fill="none"/></svg></div></div></div>
              <div class="flex items-center h-[36px]"><span class="w-[78px]">Numéro</span><div class="w-[182px] h-[36px] flex border-[3px] border-white bg-white"><div class="w-[150px] bg-[#222] text-white leading-[18px]">01</div><div class="flex-1 flex items-center justify-center"><svg width="14" height="8" viewBox="0 0 14 8"><path d="M1 1l6 6 6-6" stroke="#555" stroke-width="1.500" fill="none"/></svg></div></div></div>
              <div class="flex items-center h-[36px]"><span class="w-[78px]">Suffixe</span><div class="w-[182px] h-[36px] flex border-[3px] border-white bg-white"><div class="w-[150px] bg-[#222] text-white leading-[18px]"></div><div class="flex-1 flex items-center justify-center"><svg width="14" height="8" viewBox="0 0 14 8"><path d="M1 1l6 6 6-6" stroke="#555" stroke-width="1.500" fill="none"/></svg></div></div></div>
            </div>
          </div>
          <div class="relative w-[290px] h-[253px] shrink-0 border-2 border-[#666] rounded-[3px] pt-[28px] pl-[14px]">
            <div class="absolute left-[6px] -top-[10px] h-[19px] leading-[18px] px-[4px] bg-[#555] text-[#ddd] text-[14.500px]">Vue</div>
            <div class="w-[252px] h-[166px] border-2 border-white p-[2px]">
              <svg width="244" height="158" viewBox="3046 750 244 158" class="block"><defs><linearGradient id="cyl" x1="0" y1="0" x2="0" y2="1"><stop offset="0" stop-color="#8f8f8f"/><stop offset=".3" stop-color="#d2d2d2"/><stop offset=".6" stop-color="#b4b4b4"/><stop offset="1" stop-color="#5c5c5c"/></linearGradient><linearGradient id="cap" x1="0" y1="0" x2="1" y2="1"><stop offset="0" stop-color="#9a9aa8"/><stop offset="1" stop-color="#62626e"/></linearGradient></defs>
                <rect x="3046" y="750" width="244" height="158" fill="#f1f1f1"/><rect x="3062" y="750" width="211" height="158" fill="#fff"/>
                <path d="M3096 773L3258 809Q3268 824 3263 842L3100 880Z" fill="url(#cyl)"/>
                <ellipse cx="3096" cy="827" rx="25" ry="54" fill="url(#cap)"/>
                <path d="M3128 785v90M3190 800v58M3230 808v40" stroke="#8a8a8a" stroke-width="1" fill="none"/>
                <g fill="#555" stroke="#e4e4e4" stroke-width="2"><ellipse cx="3166" cy="807" rx="9" ry="12"/><ellipse cx="3210" cy="810" rx="7" ry="10"/><ellipse cx="3238" cy="813" rx="5" ry="8"/><ellipse cx="3258" cy="815" rx="4" ry="7"/></g>
                <path d="M3160 862q20 6 40-8M3190 858q20 3 50-8M3130 872q10 6 20 2" stroke="#999" stroke-width="3" fill="none"/>
                <path d="M3064 795h14M3066 828h14" stroke="#888" stroke-width="4"/>
              </svg>
            </div>
          </div>
        </div>
        <div class="relative w-[584px] h-[157px] mt-[24px] border-2 border-[#666] rounded-[3px] pt-[19px] pl-[8px]">
          <div class="absolute left-[8px] -top-[10px] h-[19px] leading-[18px] px-[4px] bg-[#555] text-[#ddd] text-[14.500px] whitespace-nowrap">Informations de l'équipement</div>
          <div class="flex items-center h-[26px]"><span class="w-[95px]">Désignation</span><div class="w-[455px] h-[26px] border-2 border-white text-white leading-[20px] pl-[2px] text-[16px]">CUVE CONDENSATS PROCESS</div></div>
          <div class="flex items-center h-[36px] mt-[6px]"><span class="w-[96px]">Zone</span><div class="w-[182px] h-[36px] flex border-[3px] border-white bg-white"><div class="w-[150px] bg-[#222] text-white leading-[18px] pl-[1px]">10</div><div class="flex-1 flex items-center justify-center"><svg width="14" height="8" viewBox="0 0 14 8"><path d="M1 1l6 6 6-6" stroke="#555" stroke-width="1.500" fill="none"/></svg></div></div></div>
          <div class="flex items-start h-[26px] mt-[19px]"><span class="w-[128px] leading-[20px]">Fiche technique</span><div class="w-[172px] h-[26px] bg-[#4a4a4a] text-center leading-[26px]">Accès à la fiche</div><div class="ml-[21px] w-[229px] h-[26px] border-2 border-white"></div></div>
        </div>
      </div>
    </div>
    <div class="flex-1 flex justify-between items-center px-[2px] pb-[2px] bg-[#222] -mx-[3px]">
      <div class="ml-[5px] w-[105px] h-[33px] bg-[#4a4a4a] text-center leading-[32px] text-[#ccc]">Composant</div>
      <div class="mr-[8px] w-[105px] h-[33px] bg-[#4a4a4a] text-center leading-[32px] text-[#ccc]">Fermer</div>
    </div>
  </div>

  <!-- red arrows -->
  <svg class="absolute inset-0 pointer-events-none" width="3837" height="2090" viewBox="0 0 3837 2090" fill="none" stroke="#ff0000" stroke-linecap="round" stroke-linejoin="round">
    <path d="M1808 674L2688 832" stroke-width="24"/>
    <path d="M1872 641L1808 672 1857 724M2632 778L2688 833 2620 868" stroke-width="27"/>
    <path d="M1636 1056L966 1502" stroke-width="26"/>
    <path d="M1558 1048L1636 1056 1609 1120M987 1442L966 1502 1026 1512" stroke-width="27"/>
  </svg>
</div>
</body>
</html>
